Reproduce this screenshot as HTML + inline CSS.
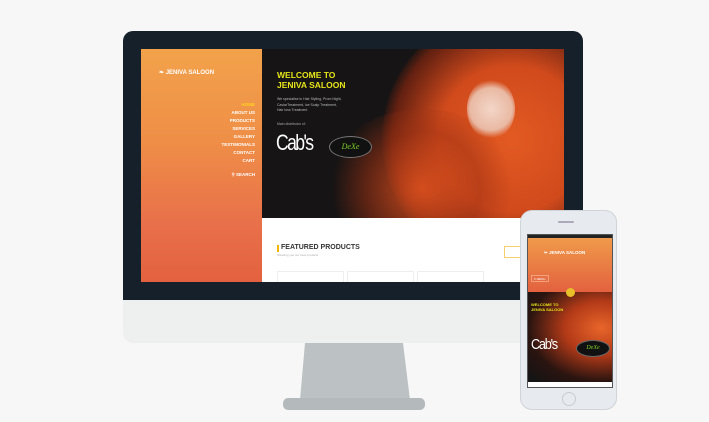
<!DOCTYPE html>
<html><head><meta charset="utf-8"><style>
*{margin:0;padding:0;box-sizing:border-box}
body{width:709px;height:422px;background:#f7f7f7;position:relative;overflow:hidden;font-family:"Liberation Sans",sans-serif}
.abs{position:absolute}
</style></head><body>
<div class="abs" style="left:123px;top:31px;width:460px;height:312px;border-radius:10px;background:#eef0f0;overflow:hidden">
 <div class="abs" style="left:0;top:0;width:460px;height:269px;background:#15202b"></div>
</div>
<svg class="abs" style="left:0;top:0" width="709" height="422"><polygon points="305,343 403,343 410,400 300,400" fill="#bcc1c3"/><rect x="283" y="398" width="142" height="12" rx="5" fill="#b4b9bb"/></svg>
<div class="abs" style="left:141px;top:49px;width:423px;height:233px;background:#fff;overflow:hidden">
 <div class="abs" style="left:0;top:0;width:121px;height:233px;background:linear-gradient(180deg,#f2a24b 0%,#ef8e47 40%,#e8704a 75%,#e3613f 100%)">
  <div class="abs" style="left:18px;top:20px;color:#fff;font-size:6px;font-weight:bold">❧ JENIVA SALOON</div>
  <div class="abs" style="right:7px;top:52px;text-align:right;color:#fff;font-size:4.5px;font-weight:bold;line-height:8px">
   <div style="color:#ffd21f">HOME</div>ABOUT US<br>PRODUCTS<br>SERVICES<br>GALLERY<br>TESTIMONIALS<br>CONTACT<br>CART<br><div style="margin-top:6px">⚲ SEARCH</div></div>
 </div>
 <div class="abs" style="left:121px;top:0;width:302px;height:169px;background:#161414;overflow:hidden">
  <div class="abs" style="left:120px;top:-40px;width:260px;height:260px;border-radius:50%;background:radial-gradient(circle,#e35a22 0%,#d04a1c 40%,rgba(150,40,15,.6) 65%,rgba(22,20,20,0) 72%)"></div>
  <div class="abs" style="left:60px;top:60px;width:200px;height:160px;border-radius:50%;background:radial-gradient(circle,rgba(220,80,30,.9) 0%,rgba(160,50,20,.5) 45%,rgba(22,20,20,0) 70%)"></div>
  <div class="abs" style="left:205px;top:30px;width:48px;height:60px;border-radius:50%;background:radial-gradient(circle,#f3d6c8 0%,#e9b9a3 55%,rgba(220,120,80,0) 75%)"></div>
  <div class="abs" style="left:15px;top:21px;color:#e6e51a;font-size:8.5px;font-weight:bold;line-height:10px">WELCOME TO<br>JENIVA SALOON</div>
  <div class="abs" style="left:15px;top:48px;color:#bbb;font-size:3.5px;line-height:5.5px">We specialise in Hair Styling, Prom Night,<br>CaviarTreatment, Ice Scalp Treatment,<br>Hair loss Treatment</div>
  <div class="abs" style="left:15px;top:73px;color:#aaa;font-size:3.5px">Main distributor of:</div>
  <div class="abs" style="left:14px;top:81px;color:#fff;font-size:22px;letter-spacing:-2px;transform:scaleX(.8);transform-origin:left">Cab's</div>
  <div class="abs" style="left:67px;top:87px;width:43px;height:22px;border-radius:50%;background:#111;border:1px solid #777;color:#7fd22a;font-size:8px;font-style:italic;text-align:center;line-height:20px;font-family:'Liberation Serif',serif">DeXe</div>
 </div>
 <div class="abs" style="left:136px;top:196px;width:2px;height:7px;background:#f5b800"></div>
 <div class="abs" style="left:140px;top:195px;font-size:7px;font-weight:bold;color:#333">FEATURED PRODUCTS</div>
 <div class="abs" style="left:136px;top:204px;font-size:3px;color:#aaa">Showing you our best products</div>
 <div class="abs" style="left:363px;top:197px;width:30px;height:12px;border:1px solid #f5d070"></div>
 <div class="abs" style="left:136px;top:222px;width:67px;height:14px;border:1px solid #eee"></div>
 <div class="abs" style="left:206px;top:222px;width:67px;height:14px;border:1px solid #eee"></div>
 <div class="abs" style="left:276px;top:222px;width:67px;height:14px;border:1px solid #eee"></div>
</div>
<div class="abs" style="left:520px;top:210px;width:97px;height:200px;border-radius:12px;background:#e7eaee;border:1px solid #cfd4d8">
 <div class="abs" style="left:37px;top:10px;width:16px;height:2px;background:#aab;border-radius:1px"></div>
 <div class="abs" style="left:6px;top:23px;width:86px;height:154px;background:#fff;border:1px solid #555;overflow:hidden">
  <div class="abs" style="left:0;top:0;width:86px;height:3px;background:#222"></div>
  <div class="abs" style="left:0;top:3px;width:86px;height:54px;background:linear-gradient(180deg,#f09a4a,#e3613f)">
   <div class="abs" style="left:16px;top:12px;color:#fff;font-size:4.5px;font-weight:bold">❧ JENIVA SALOON</div>
   <div class="abs" style="left:3px;top:37px;width:18px;height:7px;border:1px solid #f3a080;color:#fff;font-size:3px;line-height:6px;padding-left:2px">≡ MENU</div>
  </div>
  <div class="abs" style="left:0;top:57px;width:86px;height:90px;background:radial-gradient(ellipse at 85% 40%,#e8652a 0%,#b33a18 35%,#2a1410 70%,#141414 95%)">
   <div class="abs" style="left:38px;top:-4px;width:9px;height:9px;border-radius:50%;background:#e8c02a"></div>
   <div class="abs" style="left:3px;top:10px;color:#e6e51a;font-size:4px;font-weight:bold;line-height:5px">WELCOME TO<br>JENIVA SALOON</div>
   <div class="abs" style="left:3px;top:44px;color:#fff;font-size:15px;letter-spacing:-1.5px;transform:scaleX(.85);transform-origin:left">Cab's</div>
   <div class="abs" style="left:48px;top:48px;width:34px;height:17px;border-radius:50%;background:#111;border:1px solid #666;color:#7fd22a;font-size:6px;font-style:italic;text-align:center;line-height:15px;font-family:'Liberation Serif',serif">DeXe</div>
  </div>
 </div>
 <div class="abs" style="left:41px;top:181px;width:14px;height:14px;border-radius:50%;border:1px solid #c8cdd2"></div>
</div>
</body></html>
